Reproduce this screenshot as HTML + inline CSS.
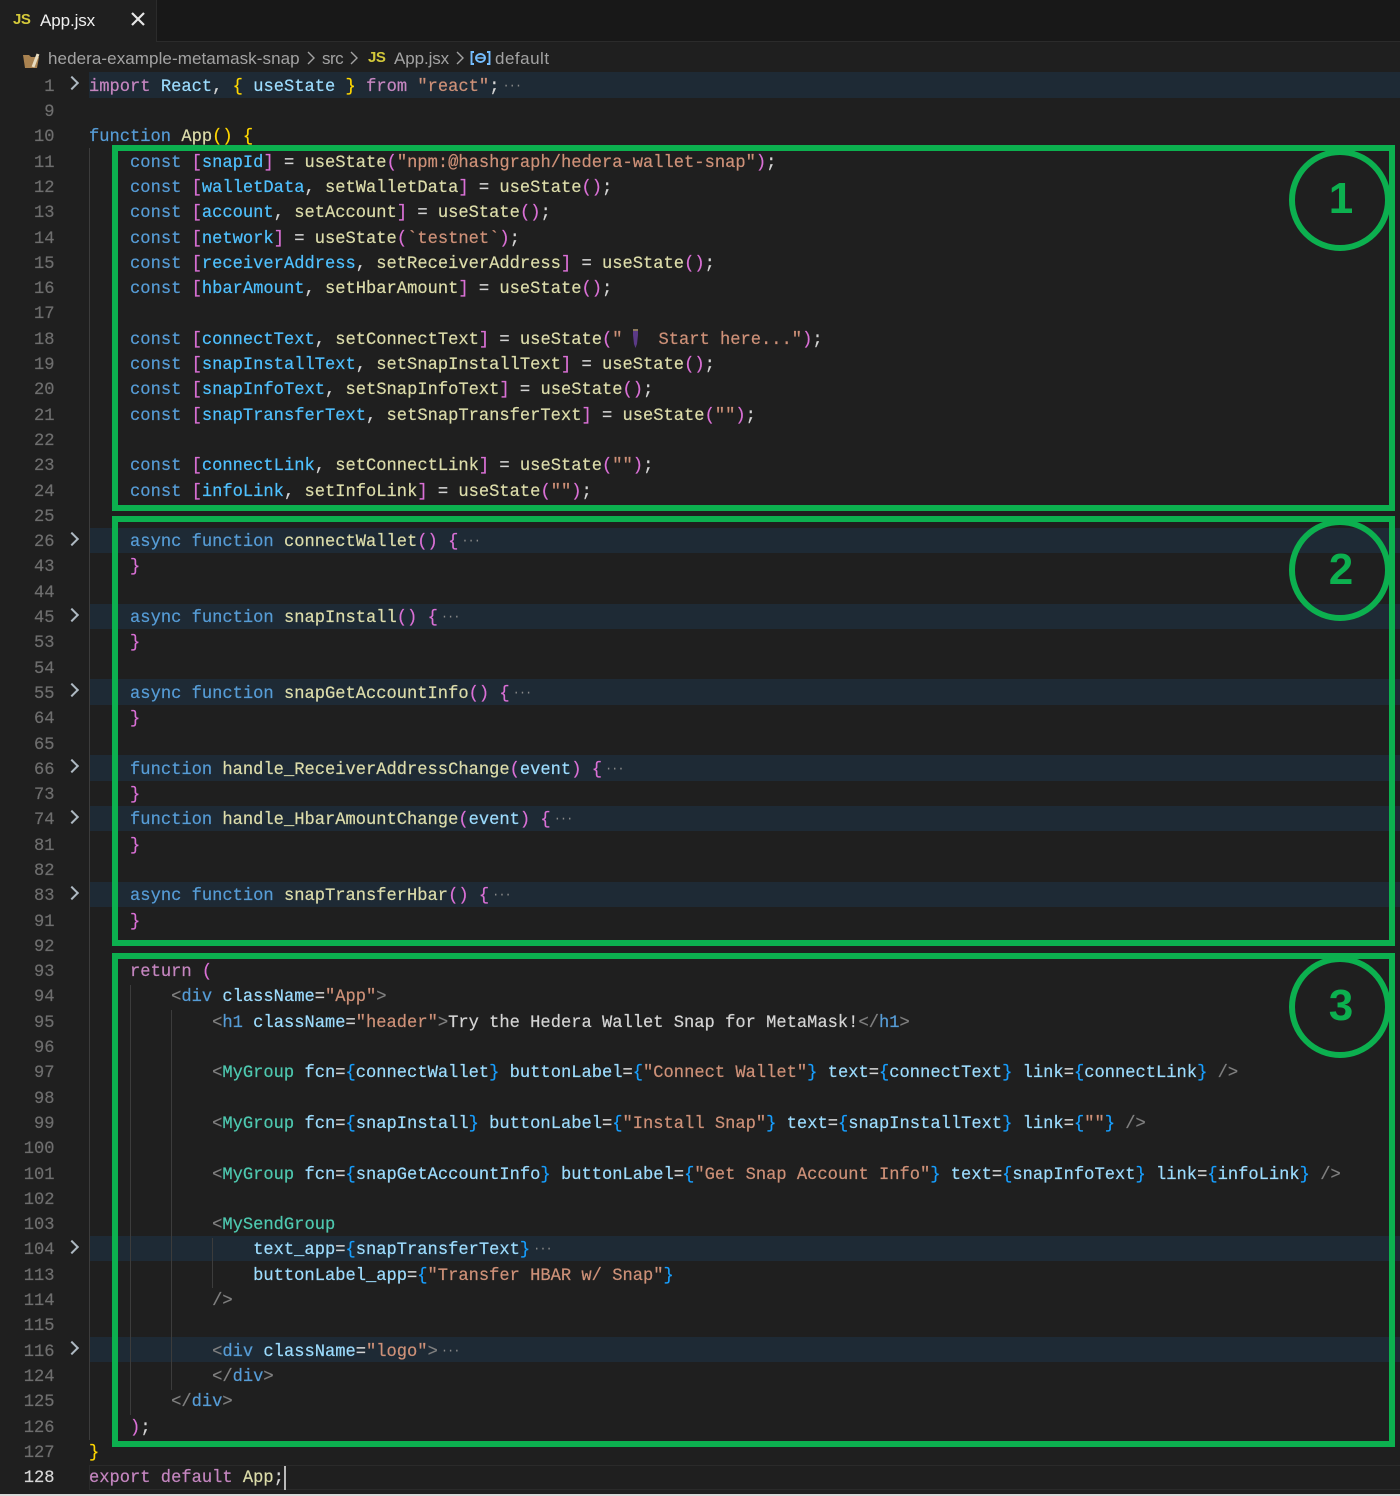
<!DOCTYPE html>
<html lang="en">
<head>
<meta charset="utf-8">
<title>App.jsx</title>
<style>
html,body{margin:0;padding:0;background:#1f1f1f}
#page{position:relative;width:1400px;height:1496px;overflow:hidden;background:#1f1f1f;color:#d4d4d4;font-family:"Liberation Mono",monospace;font-size:17.1px;filter:blur(.3px)}
#tabs{position:absolute;left:0;top:0;width:1400px;height:42px;background:#181818;border-bottom:1px solid #2b2b2b;box-sizing:border-box}
#tab{position:absolute;left:0;top:0;width:157px;height:42px;background:#1f1f1f;border-right:1px solid #2b2b2b;box-sizing:border-box}
.ui{position:absolute;font-family:"Liberation Sans",sans-serif;white-space:pre;line-height:20px}
.js{font-weight:700;color:#d4c93a;font-size:15px;letter-spacing:-.5px}
#code{position:absolute;left:0;top:72.3px;width:1400px;-webkit-text-stroke:.2px}
.r{position:relative;height:25.31px;line-height:25.31px;padding:2.5px 0 0 89px;white-space:pre;box-sizing:border-box}
.h{background:linear-gradient(90deg,transparent 89px,#1e2a35 89px)}
.n{position:absolute;right:1345.5px;top:2.5px;color:#6e6e6e}
.ch{position:absolute;left:67px;top:6px;width:8px;height:8px;border-top:2px solid #aeb9c2;border-right:2px solid #aeb9c2;transform:rotate(45deg)}
.k{color:#569cd6}.p{color:#c586c0}.f{color:#dcdcaa}.v{color:#9cdcfe}.c{color:#4fc1ff}.s{color:#ce9178}
.y{color:#ffd700}.m{color:#da70d6}.b{color:#179fff}.t{color:#808080}.g{color:#4ec9b0}
.d{color:#8a8a8a;font-size:12px;letter-spacing:-1px;margin-left:3px;position:relative;top:-2px;-webkit-text-stroke:0}
.guide{position:absolute;width:1px;background:#3c3c3c}
#cur{position:absolute;left:284px;top:1466px;width:2px;height:24px;background:#b8b8b8}
#act{position:absolute;left:89px;top:1465px;width:1311px;height:25px;border:1px solid #2a2a2a;border-right:0;box-sizing:border-box}
#strip{position:absolute;left:0;top:1494px;width:1400px;height:2px;background:#d8d8d8}
.box{position:absolute;left:112px;width:1283px;border:6px solid #0cb04f;box-sizing:border-box}
.cir{position:absolute;left:1289px;width:102px;height:102px;border:6px solid #0cb04f;border-radius:50%;box-sizing:border-box}
.num{position:absolute;left:1311px;width:60px;text-align:center;color:#0cb04f;font:700 44px/50px "Liberation Sans",sans-serif}
</style>
</head>
<body>
<div id="page">
<div id="tabs"><div id="tab"></div></div>
<div class="ui js" style="left:13px;top:10px">JS</div>
<div class="ui" style="left:40px;top:11px;font-size:17px;color:#f0f0f0;letter-spacing:-.1px">App.jsx</div>
<svg style="position:absolute;left:130px;top:11px" width="16" height="16" viewBox="0 0 16 16"><path d="M2 2L14 14M14 2L2 14" stroke="#e6e6e6" stroke-width="2.2" fill="none"/></svg>

<svg style="position:absolute;left:22px;top:50px" width="19" height="19" viewBox="0 0 19 19"><path d="M1 5h6l2 2h8l-2 11H3z" fill="#a98250"/><path d="M11 17L16 4" stroke="#e8dcc0" stroke-width="3" fill="none"/></svg>
<div class="ui" style="left:48px;top:49px;font-size:17px;color:#a3a3a3;letter-spacing:.08px">hedera-example-metamask-snap</div>
<svg style="position:absolute;left:307px;top:51px" width="9" height="14" viewBox="0 0 9 14"><path d="M1 1l6 6-6 6" stroke="#a3a3a3" stroke-width="1.4" fill="none"/></svg>
<div class="ui" style="left:322px;top:49px;font-size:17px;color:#a3a3a3;letter-spacing:-.5px">src</div>
<svg style="position:absolute;left:350px;top:51px" width="9" height="14" viewBox="0 0 9 14"><path d="M1 1l6 6-6 6" stroke="#a3a3a3" stroke-width="1.4" fill="none"/></svg>
<div class="ui js" style="left:368px;top:48px">JS</div>
<div class="ui" style="left:394px;top:49px;font-size:17px;color:#a3a3a3;letter-spacing:-.1px">App.jsx</div>
<svg style="position:absolute;left:456px;top:51px" width="9" height="14" viewBox="0 0 9 14"><path d="M1 1l6 6-6 6" stroke="#a3a3a3" stroke-width="1.4" fill="none"/></svg>
<svg style="position:absolute;left:470px;top:50px" width="21" height="16" viewBox="0 0 21 16"><path d="M4 2H1.5v12H4M17 2h2.5v12H17" stroke="#75beff" stroke-width="1.9" fill="none"/><ellipse cx="10.5" cy="8" rx="4.5" ry="4" stroke="#75beff" stroke-width="1.9" fill="none"/><path d="M7 8h7" stroke="#75beff" stroke-width="1.5"/></svg>
<div class="ui" style="left:495px;top:49px;font-size:17px;color:#a3a3a3;letter-spacing:.5px">default</div>

<div id="code">
<div class="r h"><span class="n">1</span><span class="ch"></span><span class="p">import</span> <span class="v">React</span>, <span class="y">{</span> <span class="v">useState</span> <span class="y">}</span> <span class="p">from</span> <span class="s">"react"</span>;<span class="d">···</span></div>
<div class="r"><span class="n">9</span></div>
<div class="r"><span class="n">10</span><span class="k">function</span> <span class="f">App</span><span class="y">()</span> <span class="y">{</span></div>
<div class="r"><span class="n">11</span>    <span class="k">const</span> <span class="m">[</span><span class="c">snapId</span><span class="m">]</span> = <span class="f">useState</span><span class="m">(</span><span class="s">"npm:@hashgraph/hedera-wallet-snap"</span><span class="m">)</span>;</div>
<div class="r"><span class="n">12</span>    <span class="k">const</span> <span class="m">[</span><span class="c">walletData</span>, <span class="f">setWalletData</span><span class="m">]</span> = <span class="f">useState</span><span class="m">()</span>;</div>
<div class="r"><span class="n">13</span>    <span class="k">const</span> <span class="m">[</span><span class="c">account</span>, <span class="f">setAccount</span><span class="m">]</span> = <span class="f">useState</span><span class="m">()</span>;</div>
<div class="r"><span class="n">14</span>    <span class="k">const</span> <span class="m">[</span><span class="c">network</span><span class="m">]</span> = <span class="f">useState</span><span class="m">(</span><span class="s">`testnet`</span><span class="m">)</span>;</div>
<div class="r"><span class="n">15</span>    <span class="k">const</span> <span class="m">[</span><span class="c">receiverAddress</span>, <span class="f">setReceiverAddress</span><span class="m">]</span> = <span class="f">useState</span><span class="m">()</span>;</div>
<div class="r"><span class="n">16</span>    <span class="k">const</span> <span class="m">[</span><span class="c">hbarAmount</span>, <span class="f">setHbarAmount</span><span class="m">]</span> = <span class="f">useState</span><span class="m">()</span>;</div>
<div class="r"><span class="n">17</span></div>
<div class="r"><span class="n">18</span>    <span class="k">const</span> <span class="m">[</span><span class="c">connectText</span>, <span class="f">setConnectText</span><span class="m">]</span> = <span class="f">useState</span><span class="m">(</span><span class="s">"<svg width="25.66" height="21" viewBox="0 0 25.66 21" style="vertical-align:-5px"><path d="M10 1h5v6l-1 9-1.5 4L11 16 10 7z" fill="#5b3a86"/><path d="M10 1h5v2h-5z" fill="#8d7a5c"/></svg> Start here..."</span><span class="m">)</span>;</div>
<div class="r"><span class="n">19</span>    <span class="k">const</span> <span class="m">[</span><span class="c">snapInstallText</span>, <span class="f">setSnapInstallText</span><span class="m">]</span> = <span class="f">useState</span><span class="m">()</span>;</div>
<div class="r"><span class="n">20</span>    <span class="k">const</span> <span class="m">[</span><span class="c">snapInfoText</span>, <span class="f">setSnapInfoText</span><span class="m">]</span> = <span class="f">useState</span><span class="m">()</span>;</div>
<div class="r"><span class="n">21</span>    <span class="k">const</span> <span class="m">[</span><span class="c">snapTransferText</span>, <span class="f">setSnapTransferText</span><span class="m">]</span> = <span class="f">useState</span><span class="m">(</span><span class="s">""</span><span class="m">)</span>;</div>
<div class="r"><span class="n">22</span></div>
<div class="r"><span class="n">23</span>    <span class="k">const</span> <span class="m">[</span><span class="c">connectLink</span>, <span class="f">setConnectLink</span><span class="m">]</span> = <span class="f">useState</span><span class="m">(</span><span class="s">""</span><span class="m">)</span>;</div>
<div class="r"><span class="n">24</span>    <span class="k">const</span> <span class="m">[</span><span class="c">infoLink</span>, <span class="f">setInfoLink</span><span class="m">]</span> = <span class="f">useState</span><span class="m">(</span><span class="s">""</span><span class="m">)</span>;</div>
<div class="r"><span class="n">25</span></div>
<div class="r h"><span class="n">26</span><span class="ch"></span>    <span class="k">async function</span> <span class="f">connectWallet</span><span class="m">()</span> <span class="m">{</span><span class="d">···</span></div>
<div class="r"><span class="n">43</span>    <span class="m">}</span></div>
<div class="r"><span class="n">44</span></div>
<div class="r h"><span class="n">45</span><span class="ch"></span>    <span class="k">async function</span> <span class="f">snapInstall</span><span class="m">()</span> <span class="m">{</span><span class="d">···</span></div>
<div class="r"><span class="n">53</span>    <span class="m">}</span></div>
<div class="r"><span class="n">54</span></div>
<div class="r h"><span class="n">55</span><span class="ch"></span>    <span class="k">async function</span> <span class="f">snapGetAccountInfo</span><span class="m">()</span> <span class="m">{</span><span class="d">···</span></div>
<div class="r"><span class="n">64</span>    <span class="m">}</span></div>
<div class="r"><span class="n">65</span></div>
<div class="r h"><span class="n">66</span><span class="ch"></span>    <span class="k">function</span> <span class="f">handle_ReceiverAddressChange</span><span class="m">(</span><span class="v">event</span><span class="m">)</span> <span class="m">{</span><span class="d">···</span></div>
<div class="r"><span class="n">73</span>    <span class="m">}</span></div>
<div class="r h"><span class="n">74</span><span class="ch"></span>    <span class="k">function</span> <span class="f">handle_HbarAmountChange</span><span class="m">(</span><span class="v">event</span><span class="m">)</span> <span class="m">{</span><span class="d">···</span></div>
<div class="r"><span class="n">81</span>    <span class="m">}</span></div>
<div class="r"><span class="n">82</span></div>
<div class="r h"><span class="n">83</span><span class="ch"></span>    <span class="k">async function</span> <span class="f">snapTransferHbar</span><span class="m">()</span> <span class="m">{</span><span class="d">···</span></div>
<div class="r"><span class="n">91</span>    <span class="m">}</span></div>
<div class="r"><span class="n">92</span></div>
<div class="r"><span class="n">93</span>    <span class="p">return</span> <span class="m">(</span></div>
<div class="r"><span class="n">94</span>        <span class="t">&lt;</span><span class="k">div</span> <span class="v">className</span>=<span class="s">"App"</span><span class="t">&gt;</span></div>
<div class="r"><span class="n">95</span>            <span class="t">&lt;</span><span class="k">h1</span> <span class="v">className</span>=<span class="s">"header"</span><span class="t">&gt;</span>Try the Hedera Wallet Snap for MetaMask!<span class="t">&lt;/</span><span class="k">h1</span><span class="t">&gt;</span></div>
<div class="r"><span class="n">96</span></div>
<div class="r"><span class="n">97</span>            <span class="t">&lt;</span><span class="g">MyGroup</span> <span class="v">fcn</span>=<span class="b">{</span><span class="v">connectWallet</span><span class="b">}</span> <span class="v">buttonLabel</span>=<span class="b">{</span><span class="s">"Connect Wallet"</span><span class="b">}</span> <span class="v">text</span>=<span class="b">{</span><span class="v">connectText</span><span class="b">}</span> <span class="v">link</span>=<span class="b">{</span><span class="v">connectLink</span><span class="b">}</span> <span class="t">/&gt;</span></div>
<div class="r"><span class="n">98</span></div>
<div class="r"><span class="n">99</span>            <span class="t">&lt;</span><span class="g">MyGroup</span> <span class="v">fcn</span>=<span class="b">{</span><span class="v">snapInstall</span><span class="b">}</span> <span class="v">buttonLabel</span>=<span class="b">{</span><span class="s">"Install Snap"</span><span class="b">}</span> <span class="v">text</span>=<span class="b">{</span><span class="v">snapInstallText</span><span class="b">}</span> <span class="v">link</span>=<span class="b">{</span><span class="s">""</span><span class="b">}</span> <span class="t">/&gt;</span></div>
<div class="r"><span class="n">100</span></div>
<div class="r"><span class="n">101</span>            <span class="t">&lt;</span><span class="g">MyGroup</span> <span class="v">fcn</span>=<span class="b">{</span><span class="v">snapGetAccountInfo</span><span class="b">}</span> <span class="v">buttonLabel</span>=<span class="b">{</span><span class="s">"Get Snap Account Info"</span><span class="b">}</span> <span class="v">text</span>=<span class="b">{</span><span class="v">snapInfoText</span><span class="b">}</span> <span class="v">link</span>=<span class="b">{</span><span class="v">infoLink</span><span class="b">}</span> <span class="t">/&gt;</span></div>
<div class="r"><span class="n">102</span></div>
<div class="r"><span class="n">103</span>            <span class="t">&lt;</span><span class="g">MySendGroup</span></div>
<div class="r h"><span class="n">104</span><span class="ch"></span>                <span class="v">text_app</span>=<span class="b">{</span><span class="v">snapTransferText</span><span class="b">}</span><span class="d">···</span></div>
<div class="r"><span class="n">113</span>                <span class="v">buttonLabel_app</span>=<span class="b">{</span><span class="s">"Transfer HBAR w/ Snap"</span><span class="b">}</span></div>
<div class="r"><span class="n">114</span>            <span class="t">/&gt;</span></div>
<div class="r"><span class="n">115</span></div>
<div class="r h"><span class="n">116</span><span class="ch"></span>            <span class="t">&lt;</span><span class="k">div</span> <span class="v">className</span>=<span class="s">"logo"</span><span class="t">&gt;</span><span class="d">···</span></div>
<div class="r"><span class="n">124</span>            <span class="t">&lt;/</span><span class="k">div</span><span class="t">&gt;</span></div>
<div class="r"><span class="n">125</span>        <span class="t">&lt;/</span><span class="k">div</span><span class="t">&gt;</span></div>
<div class="r"><span class="n">126</span>    <span class="m">)</span>;</div>
<div class="r"><span class="n">127</span><span class="y">}</span></div>
<div class="r"><span class="n" style="color:#d6d6d6">128</span><span class="p">export default</span> <span class="f">App</span>;</div>
</div>

<div class="guide" style="left:89px;top:148px;height:1292px"></div>
<div class="guide" style="left:130px;top:985px;height:430px"></div>
<div class="guide" style="left:171px;top:1010px;height:380px"></div>
<div class="guide" style="left:212px;top:1238px;height:50px"></div>

<div id="act"></div>
<div id="cur"></div>
<div id="strip"></div>

<div class="box" style="top:145px;height:366px"></div>
<div class="box" style="top:516px;height:430px"></div>
<div class="box" style="top:953px;height:494px"></div>

<div class="cir" style="top:149px"></div>
<div class="cir" style="top:519px"></div>
<div class="cir" style="top:956px"></div>
<div class="num" style="top:174px">1</div>
<div class="num" style="top:545px">2</div>
<div class="num" style="top:981px">3</div>
</div>
</body>
</html>
